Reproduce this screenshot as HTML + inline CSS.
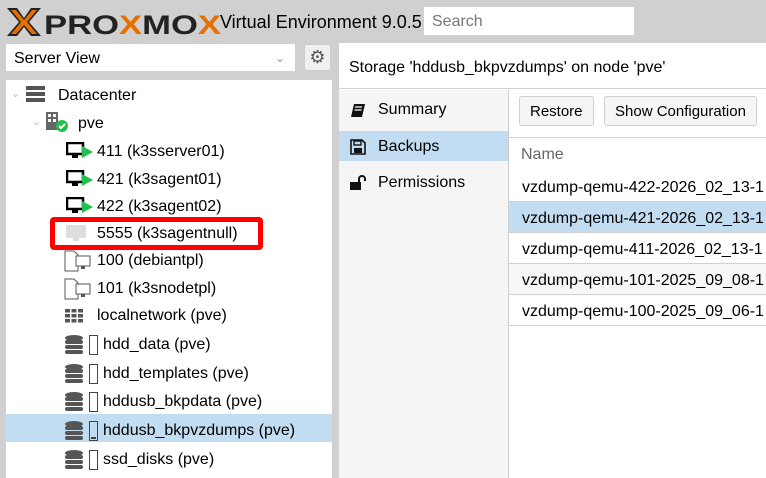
<!DOCTYPE html>
<html><head><style>
*{margin:0;padding:0;box-sizing:border-box}
body{width:766px;height:478px;background:#d0d0d0;font-family:"Liberation Sans",Arial,sans-serif;font-size:16px;color:#000;position:relative;overflow:hidden}
.a{position:absolute}
.row{position:absolute;left:0;width:326px;height:28px;line-height:28px;white-space:nowrap;padding-top:2px}
.ic{position:absolute;top:0}
.g{position:absolute;left:0;width:260px;height:31px;line-height:31px;padding-left:13px;padding-top:1px;border-bottom:1px solid #d0d0d0;white-space:nowrap}
.btn{position:absolute;height:30px;line-height:30px;border:1px solid #cfcfcf;background:#f5f5f5;border-radius:3px;font-size:15px;padding:0 10px}
.nv{position:absolute;left:0;width:169px;height:30px;line-height:32px;padding-left:39px}
</style></head><body>
<svg class="a" style="left:6px;top:5px" width="215" height="34" viewBox="0 0 215 34">
<path d="M1 3h10l7 10 7-10h10l-12 14 12 14H25l-7-9-7 9H1l12-14z" fill="#222"/>
<path d="M5 5h5l8 10 8-10h5l-10 12 10 12h-5l-8-9-8 9H5l10-12z" fill="#e57000"/>
<text x="38" y="29" font-family="Liberation Sans" font-weight="bold" font-size="27" fill="#222" textLength="177" lengthAdjust="spacingAndGlyphs">PRO<tspan fill="#e57000">X</tspan>MO<tspan fill="#e57000">X</tspan></text>
</svg>
<div class="a" style="left:220px;top:10px;font-size:18px;line-height:24px">Virtual Environment 9.0.5</div>
<div class="a" style="left:424px;top:7px;width:210px;height:28px;background:#fff;color:#777;font-size:16px;line-height:30px;padding-left:8px">Search</div>
<div class="a" style="left:6px;top:44px;width:289px;height:27px;background:#fff;line-height:29px;padding-left:8px">Server View<span style="position:absolute;right:10px;top:0;color:#999;font-size:12px">&#8964;</span></div>
<div class="a" style="left:304px;top:44px;width:27px;height:27px;background:#f0f0f0;border:1px solid #ccc;border-radius:3px;text-align:center;line-height:25px;color:#555;font-size:18px">&#9881;</div>
<div class="a" style="left:6px;top:80px;width:326px;height:398px;background:#fff">
 <div class="row" style="top:0"><span class="ic" style="left:5px;color:#bbb;font-size:11px">&#8964;</span>
  <svg class="ic" style="left:20px;top:6px" width="20" height="18"><rect x="0" y="0" width="19" height="4" fill="#555"/><rect x="0" y="6" width="19" height="4" fill="#555"/><rect x="0" y="12" width="19" height="4" fill="#555"/></svg>
  <span class="a" style="left:52px">Datacenter</span></div>
 <div class="row" style="top:28px"><span class="ic" style="left:26px;color:#bbb;font-size:11px">&#8964;</span>
  <svg class="ic" style="left:40px;top:4px" width="24" height="22"><rect x="0" y="0" width="12" height="18" fill="#666"/><rect x="2" y="2" width="3" height="3" fill="#fff"/><rect x="7" y="2" width="3" height="3" fill="#fff"/><rect x="2" y="7" width="3" height="3" fill="#fff"/><rect x="7" y="7" width="3" height="3" fill="#fff"/><circle cx="16" cy="14" r="6" fill="#21bf4b"/><path d="M13 14l2 2 4-4" stroke="#fff" stroke-width="2" fill="none"/></svg>
  <span class="a" style="left:72px">pve</span></div>
 <div class="row" style="top:56px"><svg class="ic" style="left:60px;top:6px" width="28" height="18"><rect x="1" y="1" width="16" height="11" fill="none" stroke="#000" stroke-width="2.5"/><rect x="6" y="12" width="6" height="4" fill="#000"/><path d="M16 4l11 6-11 6z" fill="#21bf4b"/></svg><span class="a" style="left:91px">411 (k3sserver01)</span></div>
 <div class="row" style="top:84px"><svg class="ic" style="left:60px;top:6px" width="28" height="18"><rect x="1" y="1" width="16" height="11" fill="none" stroke="#000" stroke-width="2.5"/><rect x="6" y="12" width="6" height="4" fill="#000"/><path d="M16 4l11 6-11 6z" fill="#21bf4b"/></svg><span class="a" style="left:91px">421 (k3sagent01)</span></div>
 <div class="row" style="top:111px"><svg class="ic" style="left:60px;top:6px" width="28" height="18"><rect x="1" y="1" width="16" height="11" fill="none" stroke="#000" stroke-width="2.5"/><rect x="6" y="12" width="6" height="4" fill="#000"/><path d="M16 4l11 6-11 6z" fill="#21bf4b"/></svg><span class="a" style="left:91px">422 (k3sagent02)</span></div>
 <div class="row" style="top:138px"><svg class="ic" style="left:60px;top:7px" width="24" height="18"><rect x="0" y="0" width="20" height="13" fill="#ddd"/><rect x="7" y="13" width="6" height="3" fill="#ddd"/></svg><span class="a" style="left:91px">5555 (k3sagentnull)</span></div>
 <div class="a" style="left:44px;top:137px;width:213px;height:33px;border:5px solid #f00;border-radius:4px"></div>
 <div class="row" style="top:165px"><svg class="ic" style="left:58px;top:5px" width="32" height="22"><path d="M1 1h9l4 4v16H1z" fill="none" stroke="#555"/><rect x="12" y="6" width="14" height="10" fill="#fff" stroke="#555"/><rect x="17" y="16" width="4" height="3" fill="#555"/></svg><span class="a" style="left:91px">100 (debiantpl)</span></div>
 <div class="row" style="top:193px"><svg class="ic" style="left:58px;top:5px" width="32" height="22"><path d="M1 1h9l4 4v16H1z" fill="none" stroke="#555"/><rect x="12" y="6" width="14" height="10" fill="#fff" stroke="#555"/><rect x="17" y="16" width="4" height="3" fill="#555"/></svg><span class="a" style="left:91px">101 (k3snodetpl)</span></div>
 <div class="row" style="top:220px"><svg class="ic" style="left:59px;top:9px" width="20" height="14"><g fill="#555"><rect x="0" y="0" width="5" height="3.5"/><rect x="6.5" y="0" width="5" height="3.5"/><rect x="13" y="0" width="5" height="3.5"/><rect x="0" y="5" width="5" height="3.5"/><rect x="6.5" y="5" width="5" height="3.5"/><rect x="13" y="5" width="5" height="3.5"/><rect x="0" y="10" width="5" height="3.5"/><rect x="6.5" y="10" width="5" height="3.5"/><rect x="13" y="10" width="5" height="3.5"/></g></svg><span class="a" style="left:91px">localnetwork (pve)</span></div>
 <div class="a" style="left:0;top:334px;width:326px;height:28px;background:#c2ddf2"></div>
 <div class="row" style="top:249px"><svg class="ic" style="left:59px;top:6px" width="36" height="20"><g fill="#555"><ellipse cx="9" cy="3" rx="9" ry="3"/><rect x="0" y="5" width="18" height="4" rx="2"/><rect x="0" y="10" width="18" height="4" rx="2"/><rect x="0" y="15" width="18" height="4" rx="2"/></g><rect x="24.5" y="0.5" width="8" height="19" fill="none" stroke="#444"/></svg><span class="a" style="left:97px">hdd_data (pve)</span></div>
 <div class="row" style="top:278px"><svg class="ic" style="left:59px;top:6px" width="36" height="20"><g fill="#555"><ellipse cx="9" cy="3" rx="9" ry="3"/><rect x="0" y="5" width="18" height="4" rx="2"/><rect x="0" y="10" width="18" height="4" rx="2"/><rect x="0" y="15" width="18" height="4" rx="2"/></g><rect x="24.5" y="0.5" width="8" height="19" fill="none" stroke="#444"/></svg><span class="a" style="left:97px">hdd_templates (pve)</span></div>
 <div class="row" style="top:306px"><svg class="ic" style="left:59px;top:6px" width="36" height="20"><g fill="#555"><ellipse cx="9" cy="3" rx="9" ry="3"/><rect x="0" y="5" width="18" height="4" rx="2"/><rect x="0" y="10" width="18" height="4" rx="2"/><rect x="0" y="15" width="18" height="4" rx="2"/></g><rect x="24.5" y="0.5" width="8" height="19" fill="none" stroke="#444"/></svg><span class="a" style="left:97px">hddusb_bkpdata (pve)</span></div>
 <div class="row" style="top:335px"><svg class="ic" style="left:59px;top:6px" width="36" height="20"><g fill="#555"><ellipse cx="9" cy="3" rx="9" ry="3"/><rect x="0" y="5" width="18" height="4" rx="2"/><rect x="0" y="10" width="18" height="4" rx="2"/><rect x="0" y="15" width="18" height="4" rx="2"/></g><rect x="24.5" y="0.5" width="8" height="19" fill="none" stroke="#444"/><rect x="26" y="16" width="5" height="2" fill="#444"/></svg><span class="a" style="left:97px">hddusb_bkpvzdumps (pve)</span></div>
 <div class="row" style="top:364px"><svg class="ic" style="left:59px;top:6px" width="36" height="20"><g fill="#555"><ellipse cx="9" cy="3" rx="9" ry="3"/><rect x="0" y="5" width="18" height="4" rx="2"/><rect x="0" y="10" width="18" height="4" rx="2"/><rect x="0" y="15" width="18" height="4" rx="2"/></g><rect x="24.5" y="0.5" width="8" height="19" fill="none" stroke="#444"/></svg><span class="a" style="left:97px">ssd_disks (pve)</span></div>
</div>
<div class="a" style="left:339px;top:43px;width:427px;height:435px;background:#fff">
 <div class="a" style="left:0;top:0;width:427px;height:46px;border-bottom:1px solid #d0d0d0;line-height:49px;padding-left:10px">Storage 'hddusb_bkpvzdumps' on node 'pve'</div>
 <div class="a" style="left:0;top:47px;width:170px;height:388px;background:#f5f5f5;border-right:1px solid #d0d0d0">
  <div class="nv" style="top:4px">Summary</div>
  <svg class="a" style="left:11px;top:13px" width="16" height="16"><path d="M4 1h11l-3 13H1z" fill="#111"/><path d="M5 4h7M4.5 7h7" stroke="#fff" stroke-width="1.2"/></svg>
  <div class="nv" style="top:41px;background:#c2ddf2">Backups</div>
  <svg class="a" style="left:11px;top:49px" width="16" height="16"><path d="M1 1h11l3 3v11H1z" fill="none" stroke="#111" stroke-width="1.6"/><rect x="4" y="2" width="7" height="4" fill="none" stroke="#111" stroke-width="1.4"/><rect x="4" y="9" width="8" height="5" fill="#111"/></svg>
  <div class="nv" style="top:77px">Permissions</div>
  <svg class="a" style="left:11px;top:85px" width="18" height="16"><path d="M9 7V4a3 3 0 0 1 6 0v2" fill="none" stroke="#111" stroke-width="2"/><rect x="0" y="7" width="11" height="8" fill="#111"/></svg>
 </div>
 <div class="btn" style="left:180px;top:53px">Restore</div>
 <div class="btn" style="left:265px;top:53px">Show Configuration</div>
 <div class="a" style="left:170px;top:94px;width:257px;border-top:1px solid #d0d0d0"></div>
 <div class="a" style="left:182px;top:102px;color:#666;line-height:20px">Name</div>
 <div class="a" style="left:170px;top:128px;width:257px;height:307px">
  <div class="g" style="top:0">vzdump-qemu-422-2026_02_13-1</div>
  <div class="g" style="top:31px;background:#c2ddf2">vzdump-qemu-421-2026_02_13-1</div>
  <div class="g" style="top:62px">vzdump-qemu-411-2026_02_13-1</div>
  <div class="g" style="top:93px;background:#f7f7f7">vzdump-qemu-101-2025_09_08-1</div>
  <div class="g" style="top:124px">vzdump-qemu-100-2025_09_06-1</div>
 </div>
</div>
</body></html>
